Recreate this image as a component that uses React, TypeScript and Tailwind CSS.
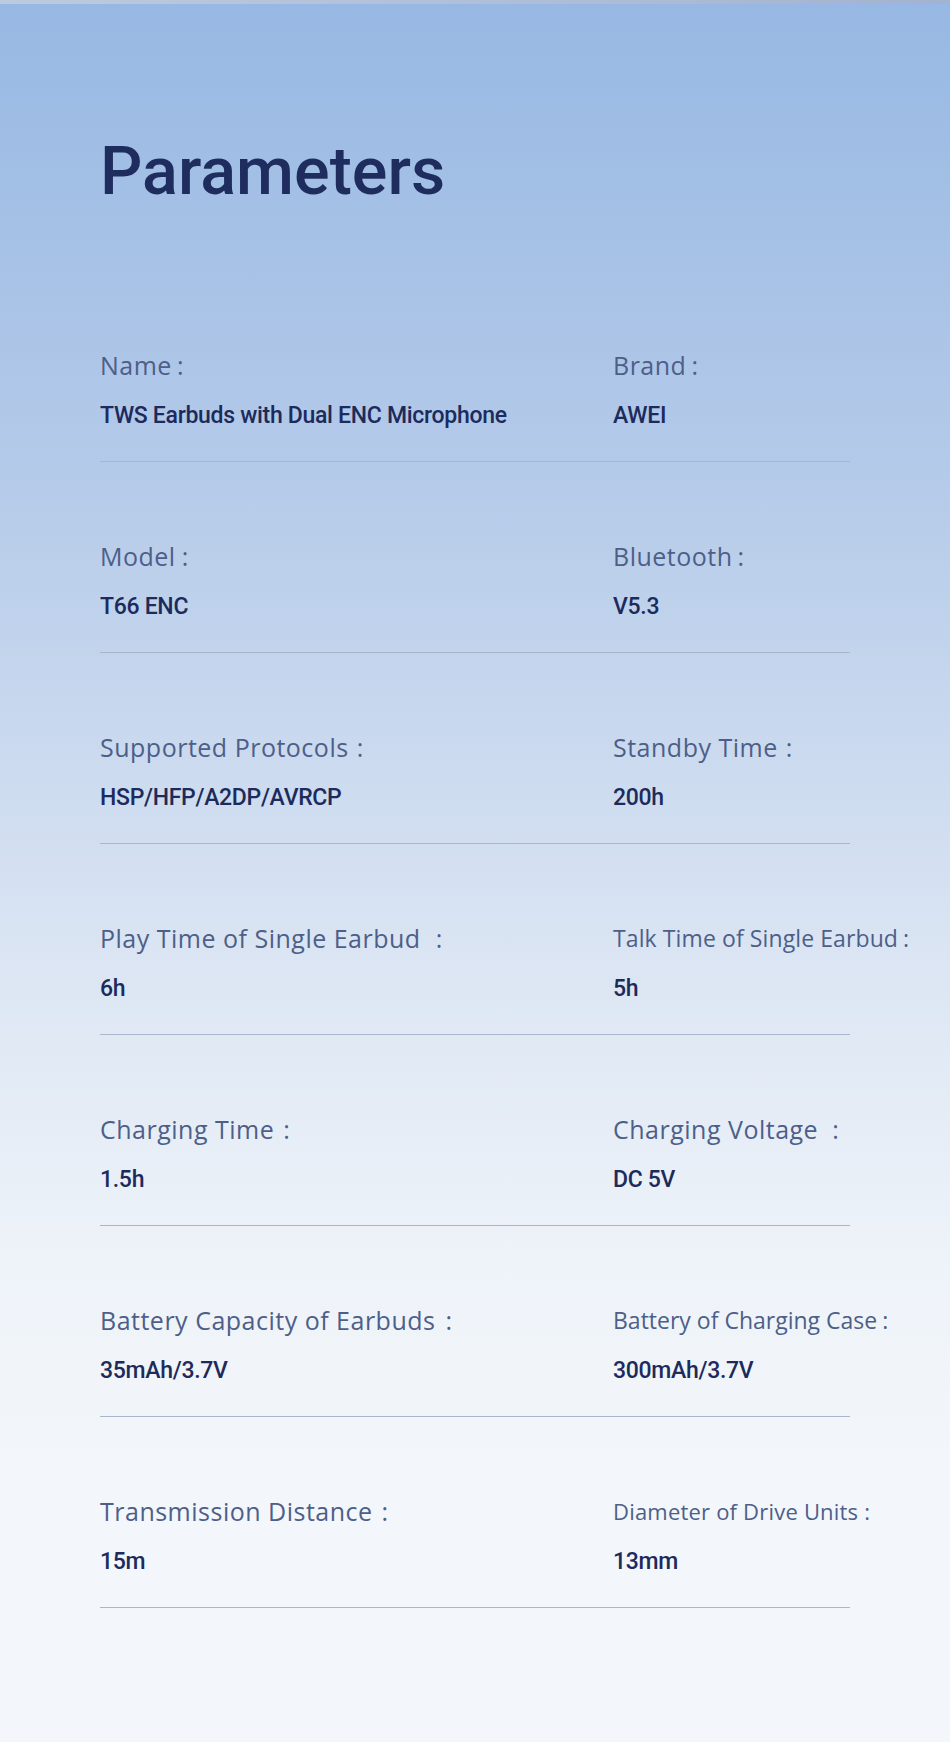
import React from 'react'

type Param = {
  label: string
  value: string
  labelClass?: string
  gap?: string
}

const rows: [Param, Param][] = [
  [
    { label: 'Name', value: 'TWS Earbuds with Dual ENC Microphone', gap: 'ml-[5px]' },
    { label: 'Brand', value: 'AWEI', gap: 'ml-[5px]' },
  ],
  [
    { label: 'Model', value: 'T66 ENC', gap: 'ml-[6px]' },
    { label: 'Bluetooth', value: 'V5.3', gap: 'ml-[5px]' },
  ],
  [
    { label: 'Supported Protocols', value: 'HSP/HFP/A2DP/AVRCP', gap: 'ml-[8px]' },
    { label: 'Standby Time', value: '200h', gap: 'ml-[8px]' },
  ],
  [
    { label: 'Play Time of Single Earbud', value: '6h', gap: 'ml-[15px]' },
    {
      label: 'Talk Time of Single Earbud',
      value: '5h',
      labelClass: 'text-[23px] tracking-[0.1px]',
      gap: 'ml-[5px]',
    },
  ],
  [
    { label: 'Charging Time', value: '1.5h', gap: 'ml-[9px]' },
    { label: 'Charging Voltage', value: 'DC 5V', gap: 'ml-[14px]' },
  ],
  [
    { label: 'Battery Capacity of Earbuds', value: '35mAh/3.7V', gap: 'ml-[10px]' },
    {
      label: 'Battery of Charging Case',
      value: '300mAh/3.7V',
      labelClass: 'text-[23px] tracking-[0px]',
      gap: 'ml-[5px]',
    },
  ],
  [
    { label: 'Transmission Distance', value: '15m', gap: 'ml-[9px]' },
    {
      label: 'Diameter of Drive Units',
      value: '13mm',
      labelClass: 'text-[22px] tracking-[0.2px]',
      gap: 'ml-[6px]',
    },
  ],
]

const labelFont = {
  fontFamily: '"Open Sans", "Noto Sans", sans-serif',
}
const valueFont = { fontFamily: 'Roboto, "Noto Sans", sans-serif' }

const Cell = ({ item }: { item: Param }) => (
  <div className="flex flex-col">
    <div
      style={labelFont}
      className={`h-[28px] whitespace-nowrap leading-[28px] text-[#4d5f89] ${
        item.labelClass ?? 'text-[25px] tracking-[0.5px]'
      }`}
    >
      {item.label}
      <span className={item.gap ?? 'ml-[9px]'}>:</span>
    </div>
    <div
      style={valueFont}
      className="mt-[23px] h-[28px] whitespace-nowrap text-[23px] font-medium leading-[28px] tracking-[-0.3px] text-[#1c2b5c]"
    >
      {item.value}
    </div>
  </div>
)

export default function App() {
  return (
    <div className="relative min-h-[1742px] w-[950px] overflow-hidden bg-[linear-gradient(180deg,#97b8e3_0%,#b4cae9_27%,#dbe5f3_55%,#eef3f9_72%,#f3f6fa_85%,#f3f6fa_100%)]">
      <div className="h-[4px] w-full bg-[linear-gradient(90deg,#bccadf,#aebdd7_60%,#a2b3cf)]" />
      <div className="pl-[100px] pt-[133px]">
        <h1
          style={valueFont}
          className="h-[68px] text-[66.5px] font-medium leading-[68px] text-[#1e2d5e]"
        >
          Parameters
        </h1>
        <div className="mt-[66px] w-[750px]">
          {rows.map(([left, right]) => (
            <div
              key={left.label}
              className="grid grid-cols-[513px_1fr] border-b border-[#a9b7ce] pb-[31px] pt-[80px]"
            >
              <Cell item={left} />
              <Cell item={right} />
            </div>
          ))}
        </div>
      </div>
    </div>
  )
}
